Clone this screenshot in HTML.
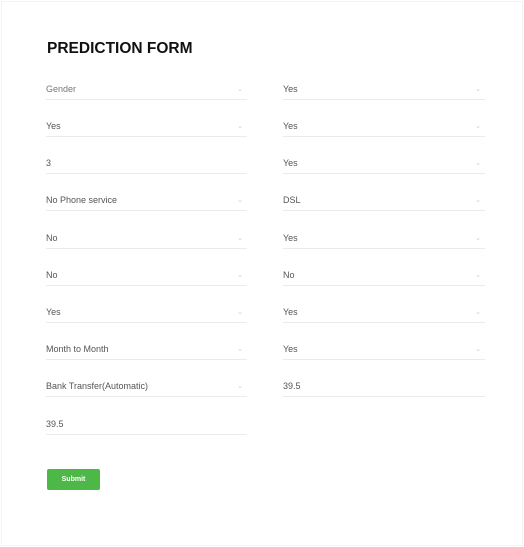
<!DOCTYPE html>
<html><head><style>
body{margin:0;width:524px;height:547px;background:#fff;font-family:"Liberation Sans",sans-serif;position:relative;overflow:hidden}
.frame{position:absolute;left:1px;top:1px;width:520px;height:543px;border:1px solid #f4f4f4}
h1{position:absolute;left:47px;top:40px;margin:0;font-size:15.5px;font-weight:bold;color:#111}
.f{position:absolute;height:17px;border-bottom:1px solid #ebebeb;font-size:9px;color:#555;line-height:14px}
.f span.a{position:absolute;right:4px;top:1px;color:#ccc;font-size:7px}
.btn{position:absolute;left:47px;top:469px;width:53px;height:21px;background:#4db848;border-radius:2px;color:#fff;font-size:7px;font-weight:bold;text-align:center;line-height:21px}
</style></head><body>
<div class="frame"></div>
<h1>PREDICTION FORM</h1>
<div class="f" style="left:46px;top:82px;width:201px;color:#777">Gender<span class="a">⌄</span></div>
<div class="f" style="left:46px;top:119px;width:201px">Yes<span class="a">⌄</span></div>
<div class="f" style="left:46px;top:156px;width:201px">3</div>
<div class="f" style="left:46px;top:193px;width:201px">No Phone service<span class="a">⌄</span></div>
<div class="f" style="left:46px;top:231px;width:201px">No<span class="a">⌄</span></div>
<div class="f" style="left:46px;top:268px;width:201px">No<span class="a">⌄</span></div>
<div class="f" style="left:46px;top:305px;width:201px">Yes<span class="a">⌄</span></div>
<div class="f" style="left:46px;top:342px;width:201px">Month to Month<span class="a">⌄</span></div>
<div class="f" style="left:46px;top:379px;width:201px">Bank Transfer(Automatic)<span class="a">⌄</span></div>
<div class="f" style="left:46px;top:417px;width:201px">39.5</div>
<div class="f" style="left:283px;top:82px;width:202px">Yes<span class="a">⌄</span></div>
<div class="f" style="left:283px;top:119px;width:202px">Yes<span class="a">⌄</span></div>
<div class="f" style="left:283px;top:156px;width:202px">Yes<span class="a">⌄</span></div>
<div class="f" style="left:283px;top:193px;width:202px">DSL<span class="a">⌄</span></div>
<div class="f" style="left:283px;top:231px;width:202px">Yes<span class="a">⌄</span></div>
<div class="f" style="left:283px;top:268px;width:202px">No<span class="a">⌄</span></div>
<div class="f" style="left:283px;top:305px;width:202px">Yes<span class="a">⌄</span></div>
<div class="f" style="left:283px;top:342px;width:202px">Yes<span class="a">⌄</span></div>
<div class="f" style="left:283px;top:379px;width:202px">39.5</div>
<div class="btn">Submit</div>
</body></html>
